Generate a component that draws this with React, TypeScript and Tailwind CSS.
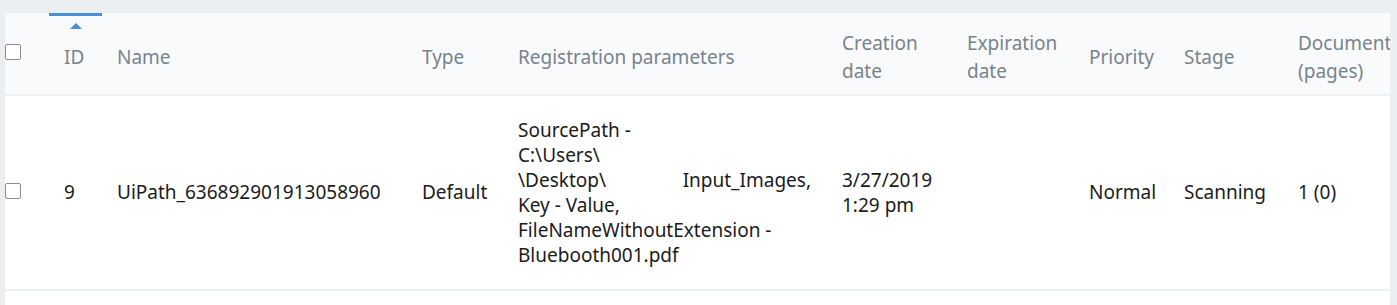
import React from 'react';

const font = { fontFamily: '"Noto Sans", "Open Sans", sans-serif' };

function Checkbox() {
  return <div className="h-4 w-4 rounded-[2px] border border-[#8c8c8c] bg-white" />;
}

export default function App() {
  return (
    <div className="h-[305px] w-[1397px] bg-[#eceff1] pl-[5px] pt-[13px]" style={font}>
      <div className="h-full w-[1385px] overflow-hidden bg-white">
        <table className="w-[1420px] table-fixed border-collapse text-[19px]">
          <colgroup>
            <col className="w-[44px]" />
            <col className="w-[53px]" />
            <col className="w-[305px]" />
            <col className="w-[96px]" />
            <col className="w-[324px]" />
            <col className="w-[125px]" />
            <col className="w-[122px]" />
            <col className="w-[95px]" />
            <col className="w-[114px]" />
            <col />
          </colgroup>
          <thead>
            <tr className="h-[82px] border-b-2 border-[#eef1f3] bg-[#f8fafb] text-left font-normal text-[#78838d] leading-[28px]">
              <th className="p-0 pb-[3px] align-middle font-normal">
                <Checkbox />
              </th>
              <th className="relative pl-[15px] pt-[6px] align-middle font-normal">
                <div className="absolute left-0 right-0 top-0 h-[3px] bg-[#4a8fd9]" />
                <div className="absolute left-1/2 top-[10px] h-0 w-0 -translate-x-1/2 border-x-[6px] border-b-[6px] border-x-transparent border-b-[#4a8fd9]" />
                ID
              </th>
              <th className="pl-[15px] pt-[6px] align-middle font-normal">Name</th>
              <th className="pl-[15px] pt-[6px] align-middle font-normal">Type</th>
              <th className="pl-[15px] pt-[6px] align-middle font-normal">Registration parameters</th>
              <th className="pl-[15px] pt-[6px] align-middle font-normal">
                Creation
                <br />
                date
              </th>
              <th className="pl-[15px] pt-[6px] align-middle font-normal">
                Expiration
                <br />
                date
              </th>
              <th className="pl-[15px] pt-[6px] align-middle font-normal">Priority</th>
              <th className="pl-[15px] pt-[6px] align-middle font-normal">Stage</th>
              <th className="whitespace-nowrap pl-[15px] pt-[6px] align-middle font-normal">
                Document
                <br />
                (pages)
              </th>
            </tr>
          </thead>
          <tbody>
            <tr className="h-[195px] border-b-2 border-[#eef1f3] text-left text-[#1b1b1b] leading-[25px]">
              <td className="p-0 pb-[3px] align-middle">
                <Checkbox />
              </td>
              <td className="pl-[15px] align-middle">9</td>
              <td className="pl-[15px] align-middle">UiPath_636892901913058960</td>
              <td className="pl-[15px] align-middle">Default</td>
              <td className="pl-[15px] pr-[16px] align-middle">
                <div>SourcePath -</div>
                <div>C:\Users\</div>
                <div className="flex justify-between">
                  <span>\Desktop\</span>
                  <span>Input_Images,</span>
                </div>
                <div>Key - Value,</div>
                <div>FileNameWithoutExtension -</div>
                <div>Bluebooth001.pdf</div>
              </td>
              <td className="pl-[15px] align-middle">
                3/27/2019
                <br />
                1:29 pm
              </td>
              <td className="pl-[15px] align-middle" />
              <td className="pl-[15px] align-middle">Normal</td>
              <td className="pl-[15px] align-middle">Scanning</td>
              <td className="pl-[15px] align-middle">1 (0)</td>
            </tr>
          </tbody>
        </table>
      </div>
    </div>
  );
}
